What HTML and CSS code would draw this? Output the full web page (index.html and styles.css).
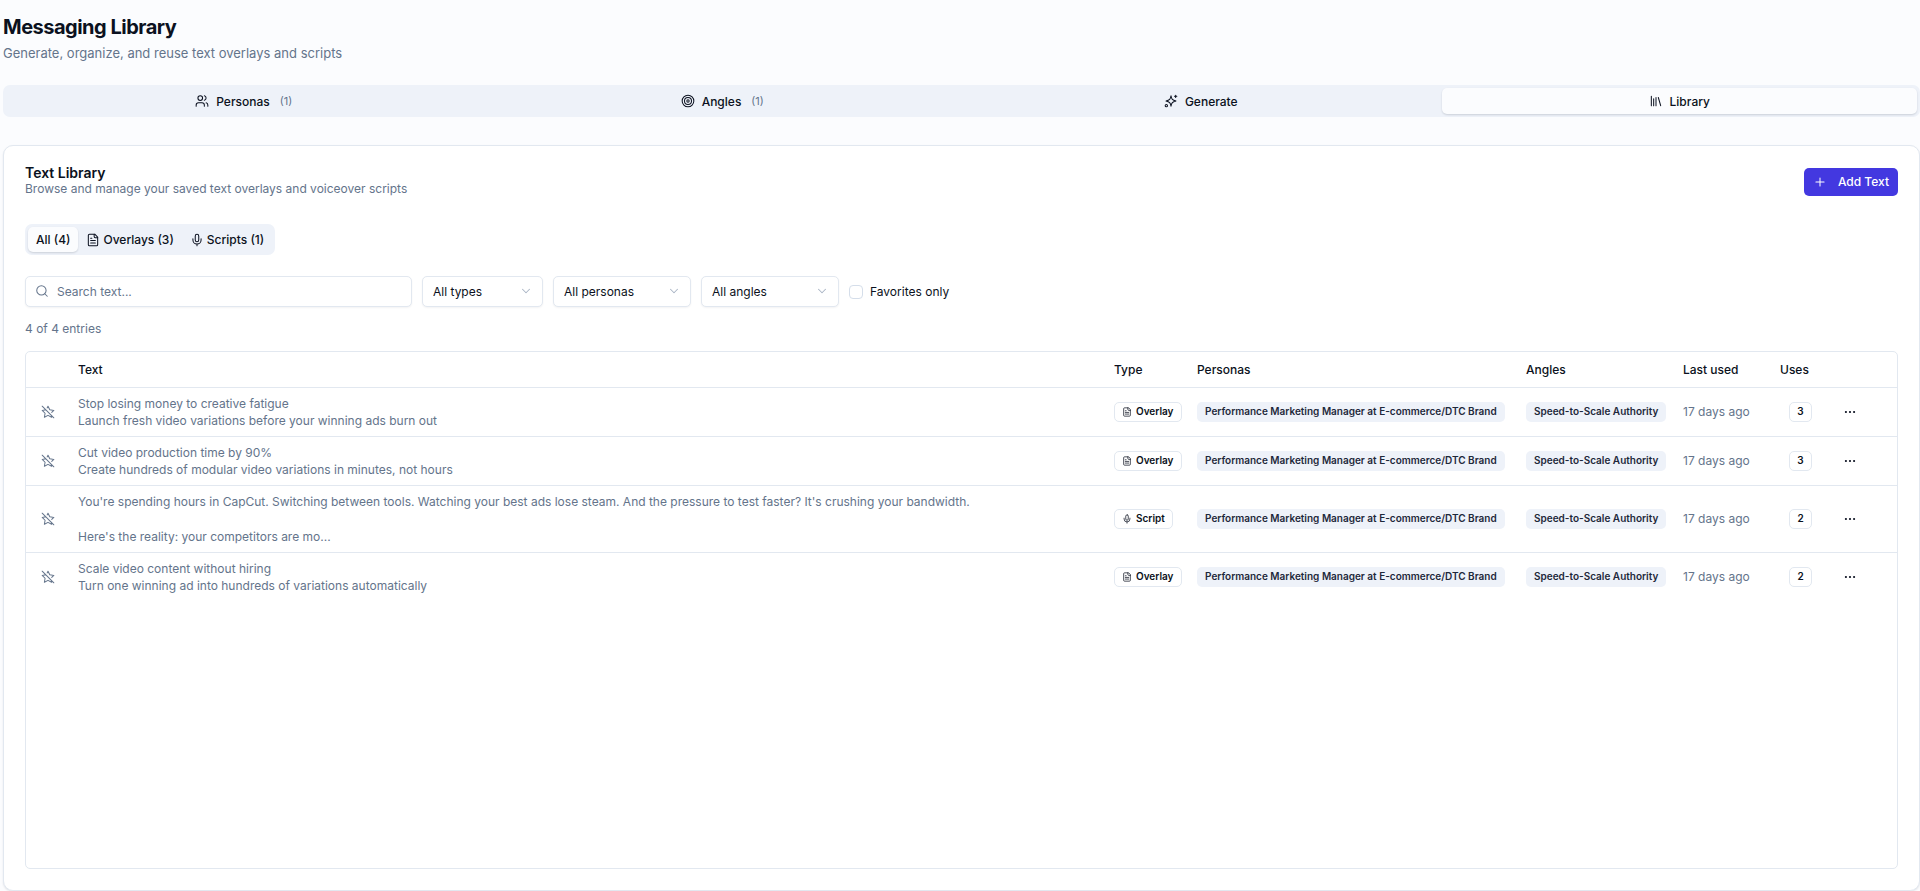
FILE: index.html
```
<!DOCTYPE html>
<html lang="en">
<head>
    <meta charset="UTF-8">
    <meta name="viewport" content="width=device-width, initial-scale=1.0">
    <title>Messaging Library</title>
    <link rel="stylesheet" href="styles.css">
</head>
<body>
    <!-- icon sprite -->
    <svg class="sprite" aria-hidden="true">
        <symbol id="users" viewBox="0 0 24 24"><path d="M16 21v-2a4 4 0 0 0-4-4H6a4 4 0 0 0-4 4v2"/><circle cx="9" cy="7" r="4"/><path d="M22 21v-2a4 4 0 0 0-3-3.87M16 3.13a4 4 0 0 1 0 7.75"/></symbol>
        <symbol id="target" viewBox="0 0 24 24"><circle cx="12" cy="12" r="10"/><circle cx="12" cy="12" r="6"/><circle cx="12" cy="12" r="2"/></symbol>
        <symbol id="sparkles" viewBox="0 0 24 24"><path d="M12 3c.9 6 2.500 7.600 8.500 9-6 1.400-7.600 3-8.500 9-.9-6-2.500-7.600-8.500-9 6-1.400 7.600-3 8.500-9z"/><path d="M20 2v4M22 4h-4"/><circle cx="4" cy="20" r="2"/></symbol>
        <symbol id="library" viewBox="0 0 24 24"><path d="m16 6 4 14M12 6v14M8 8v12M4 4v16"/></symbol>
        <symbol id="plus" viewBox="0 0 24 24"><path d="M5 12h14M12 5v14"/></symbol>
        <symbol id="file" viewBox="0 0 24 24"><path d="M15 2H6a2 2 0 0 0-2 2v16a2 2 0 0 0 2 2h12a2 2 0 0 0 2-2V7z"/><path d="M14 2v4a2 2 0 0 0 2 2h4M10 9H8M16 13H8M16 17H8"/></symbol>
        <symbol id="mic" viewBox="0 0 24 24"><path d="M12 19v3M19 10v2a7 7 0 0 1-14 0v-2"/><rect x="9" y="2" width="6" height="13" rx="3"/></symbol>
        <symbol id="search" viewBox="0 0 24 24"><circle cx="11" cy="11" r="8"/><path d="m21 21-4.300-4.300"/></symbol>
        <symbol id="chevron" viewBox="0 0 24 24"><path d="m6 9 6 6 6-6"/></symbol>
        <symbol id="star-off" viewBox="0 0 24 24"><path d="M8.340 8.340 2 9.270l5 4.870L5.820 21 12 17.770 18.180 21l-.59-3.430M18.420 12.760 22 9.270l-6.910-1L12 2l-1.440 2.910M2 2l20 20"/></symbol>
        <symbol id="dots" viewBox="0 0 24 24"><circle cx="12" cy="12" r="1"/><circle cx="19" cy="12" r="1"/><circle cx="5" cy="12" r="1"/></symbol>
    </svg>

    <main class="page">
        <header class="page-header">
            <h1>Messaging Library</h1>
            <p>Generate, organize, and reuse text overlays and scripts</p>
        </header>

        <nav class="tabs">
            <button class="tab"><svg class="icon"><use href="#users"/></svg>Personas <span class="count">(1)</span></button>
            <button class="tab"><svg class="icon"><use href="#target"/></svg>Angles <span class="count">(1)</span></button>
            <button class="tab"><svg class="icon"><use href="#sparkles"/></svg>Generate</button>
            <button class="tab active"><svg class="icon"><use href="#library"/></svg>Library</button>
        </nav>

        <section class="card">
            <div class="card-header">
                <div>
                    <h2>Text Library</h2>
                    <p>Browse and manage your saved text overlays and voiceover scripts</p>
                </div>
                <button class="add-button"><svg class="icon"><use href="#plus"/></svg>Add Text</button>
            </div>

            <div class="pills">
                <button class="pill active">All (4)</button>
                <button class="pill"><svg class="icon"><use href="#file"/></svg>Overlays (3)</button>
                <button class="pill"><svg class="icon"><use href="#mic"/></svg>Scripts (1)</button>
            </div>

            <div class="filters">
                <div class="search">
                    <svg class="icon"><use href="#search"/></svg>
                    <input type="text" placeholder="Search text..." aria-label="Search text">
                </div>
                <div class="select select-small">
                    <select aria-label="Type"><option>All types</option></select>
                    <svg class="icon"><use href="#chevron"/></svg>
                </div>
                <div class="select">
                    <select aria-label="Persona"><option>All personas</option></select>
                    <svg class="icon"><use href="#chevron"/></svg>
                </div>
                <div class="select">
                    <select aria-label="Angle"><option>All angles</option></select>
                    <svg class="icon"><use href="#chevron"/></svg>
                </div>
                <div class="favorites">
                    <input type="checkbox" id="favorites">
                    <label for="favorites">Favorites only</label>
                </div>
            </div>

            <p class="entries">4 of 4 entries</p>

            <div class="table-wrap">
                <table>
                    <thead>
                        <tr>
                            <th class="col-star"></th>
                            <th>Text</th>
                            <th class="col-type">Type</th>
                            <th class="col-personas">Personas</th>
                            <th class="col-angles">Angles</th>
                            <th class="col-last">Last used</th>
                            <th class="col-uses">Uses</th>
                            <th class="col-actions"></th>
                        </tr>
                    </thead>
                    <tbody>
                        <tr>
                            <td><button class="icon-button star" aria-label="Favorite"><svg class="icon"><use href="#star-off"/></svg></button></td>
                            <td class="text"><p>Stop losing money to creative fatigue</p><p>Launch fresh video variations before your winning ads burn out</p></td>
                            <td><span class="badge outline"><svg class="icon"><use href="#file"/></svg>Overlay</span></td>
                            <td><span class="badge">Performance Marketing Manager at E-commerce/DTC Brand</span></td>
                            <td><span class="badge">Speed-to-Scale Authority</span></td>
                            <td class="last-used">17 days ago</td>
                            <td class="uses"><span class="badge outline">3</span></td>
                            <td><button class="icon-button" aria-label="Actions"><svg class="icon"><use href="#dots"/></svg></button></td>
                        </tr>
                        <tr>
                            <td><button class="icon-button star" aria-label="Favorite"><svg class="icon"><use href="#star-off"/></svg></button></td>
                            <td class="text"><p>Cut video production time by 90%</p><p>Create hundreds of modular video variations in minutes, not hours</p></td>
                            <td><span class="badge outline"><svg class="icon"><use href="#file"/></svg>Overlay</span></td>
                            <td><span class="badge">Performance Marketing Manager at E-commerce/DTC Brand</span></td>
                            <td><span class="badge">Speed-to-Scale Authority</span></td>
                            <td class="last-used">17 days ago</td>
                            <td class="uses"><span class="badge outline">3</span></td>
                            <td><button class="icon-button" aria-label="Actions"><svg class="icon"><use href="#dots"/></svg></button></td>
                        </tr>
                        <tr>
                            <td><button class="icon-button star" aria-label="Favorite"><svg class="icon"><use href="#star-off"/></svg></button></td>
                            <td class="text script"><p>You're spending hours in CapCut. Switching between tools. Watching your best ads lose steam. And the pressure to test faster? It's crushing your bandwidth.</p><p>Here's the reality: your competitors are mo...</p></td>
                            <td><span class="badge outline"><svg class="icon"><use href="#mic"/></svg>Script</span></td>
                            <td><span class="badge">Performance Marketing Manager at E-commerce/DTC Brand</span></td>
                            <td><span class="badge">Speed-to-Scale Authority</span></td>
                            <td class="last-used">17 days ago</td>
                            <td class="uses"><span class="badge outline">2</span></td>
                            <td><button class="icon-button" aria-label="Actions"><svg class="icon"><use href="#dots"/></svg></button></td>
                        </tr>
                        <tr>
                            <td><button class="icon-button star" aria-label="Favorite"><svg class="icon"><use href="#star-off"/></svg></button></td>
                            <td class="text"><p>Scale video content without hiring</p><p>Turn one winning ad into hundreds of variations automatically</p></td>
                            <td><span class="badge outline"><svg class="icon"><use href="#file"/></svg>Overlay</span></td>
                            <td><span class="badge">Performance Marketing Manager at E-commerce/DTC Brand</span></td>
                            <td><span class="badge">Speed-to-Scale Authority</span></td>
                            <td class="last-used">17 days ago</td>
                            <td class="uses"><span class="badge outline">2</span></td>
                            <td><button class="icon-button" aria-label="Actions"><svg class="icon"><use href="#dots"/></svg></button></td>
                        </tr>
                    </tbody>
                </table>
            </div>
        </section>
    </main>
</body>
</html>
```
FILE: styles.css
```
* {
    box-sizing: border-box;
}

body {
    margin: 0;
    font-family: Inter, sans-serif;
    font-size: 12px;
    line-height: 17px;
    color: #0b1120;
    background-color: #fbfcfe;
}

h1, h2, p {
    margin: 0;
}

button, input, select {
    font: inherit;
    color: inherit;
}

button {
    display: flex;
    align-items: center;
    justify-content: center;
    padding: 0;
    border: none;
    background: none;
    cursor: pointer;
}

.sprite {
    display: none;
}

.icon {
    width: 14px;
    height: 14px;
    flex-shrink: 0;
    fill: none;
    stroke: currentColor;
    stroke-width: 1.75;
    stroke-linecap: round;
    stroke-linejoin: round;
}

.page {
    display: flex;
    flex-direction: column;
    min-height: 100vh;
    padding: 13px 0 0 3px;
}

.page-header {
    margin-bottom: 21px;
}

h1 {
    font-size: 20px;
    line-height: 28px;
    font-weight: 700;
    letter-spacing: -0.025em;
}

.page-header p {
    margin-top: 2px;
    font-size: 13px;
    line-height: 21px;
    color: #64748b;
}

/* top tabs */
.tabs {
    display: grid;
    grid-template-columns: repeat(4, 1fr);
    gap: 3px;
    padding: 3px;
    margin-bottom: 28px;
    border-radius: 7px;
    background-color: #eef2f9;
}

.tab {
    gap: 7px;
    height: 26px;
    border-radius: 5px;
    font-weight: 500;
}

.count {
    margin-left: 3px;
    font-size: 11px;
    font-weight: 400;
    color: #64748b;
}

.active {
    background-color: #fbfcfe;
    box-shadow: 0 1px 2px rgba(15, 23, 42, 0.15);
}

/* card */
.card {
    display: flex;
    flex-direction: column;
    flex: 1;
    padding: 20px 21px 21px;
    border: 1px solid #e2e8f0;
    border-radius: 10px;
    background-color: #fff;
    box-shadow: 0 1px 2px rgba(15, 23, 42, 0.1);
}

.card-header {
    display: flex;
    align-items: center;
    justify-content: space-between;
    margin-bottom: 27px;
}

h2 {
    font-size: 14px;
    line-height: 14px;
    font-weight: 600;
}

.card-header p {
    color: #64748b;
}

.add-button {
    gap: 11px;
    height: 28px;
    padding: 0 9px;
    border-radius: 5px;
    font-weight: 500;
    color: #fff;
    background-color: #4338e0;
}

.pills {
    display: flex;
    align-self: flex-start;
    padding: 3px;
    margin-bottom: 21px;
    border-radius: 7px;
    background-color: #eef2f9;
}

.pill {
    gap: 3px;
    height: 25px;
    padding: 0 8px;
    border-radius: 5px;
    font-weight: 500;
}

.filters {
    display: flex;
    align-items: center;
    gap: 10px;
    margin-bottom: 13px;
}

.search, .select {
    position: relative;
}

.search input, .select select {
    width: 100%;
    height: 31px;
    border: 1px solid #e2e8f0;
    border-radius: 5px;
    background-color: #fff;
    box-shadow: 0 1px 2px rgba(15, 23, 42, 0.05);
}

.search {
    width: 387px;
}

.search input {
    padding: 0 10px 0 31px;
}

.search input::placeholder {
    color: #64748b;
    opacity: 1;
}

.search .icon {
    position: absolute;
    top: 8px;
    left: 10px;
    color: #64748b;
}

.select {
    width: 138px;
}

.select-small {
    width: 121px;
}

.select select {
    appearance: none;
    padding: 0 10px;
}

.select .icon {
    position: absolute;
    top: 8px;
    right: 10px;
    color: #a9b4c4;
    pointer-events: none;
}

.favorites {
    display: flex;
    align-items: center;
    gap: 7px;
}

.favorites input {
    appearance: none;
    width: 14px;
    height: 14px;
    margin: 0;
    border: 1px solid #d5deea;
    border-radius: 4px;
    background-color: #fff;
}

.entries {
    margin-bottom: 14px;
    color: #64748b;
}

/* library table */
.table-wrap {
    flex: 1;
    border: 1px solid #e2e8f0;
    border-radius: 5px;
}

table {
    width: 100%;
    border-collapse: collapse;
    table-layout: fixed;
}

th, td {
    padding: 7px;
    text-align: left;
    vertical-align: middle;
    white-space: nowrap;
}

tr {
    border-bottom: 1px solid #e2e8f0;
}

tbody tr:last-child {
    border-bottom: none;
}

th {
    height: 35px;
    font-weight: 500;
}

.col-star { width: 45px; }
.col-type { width: 83px; }
.col-personas { width: 329px; }
.col-angles { width: 157px; }
.col-last { width: 97px; }
.col-uses { width: 55px; }
.col-actions { width: 69px; }

.text, .last-used {
    color: #64748b;
}

.script p + p {
    margin-top: 18px;
}

.uses {
    text-align: center;
}

.icon-button {
    width: 30px;
    height: 28px;
}

.star {
    color: #64748b;
}

.badge {
    display: inline-flex;
    align-items: center;
    gap: 4px;
    height: 20px;
    padding: 0 8px;
    border-radius: 5px;
    font-size: 10px;
    font-weight: 600;
    vertical-align: middle;
    color: #1e293b;
    background-color: #eef2f9;
}

.badge.outline {
    padding: 0 7px;
    border: 1px solid #e2e8f0;
    color: #0b1120;
    background-color: #fff;
}

.badge .icon {
    width: 10px;
    height: 10px;
}
```
